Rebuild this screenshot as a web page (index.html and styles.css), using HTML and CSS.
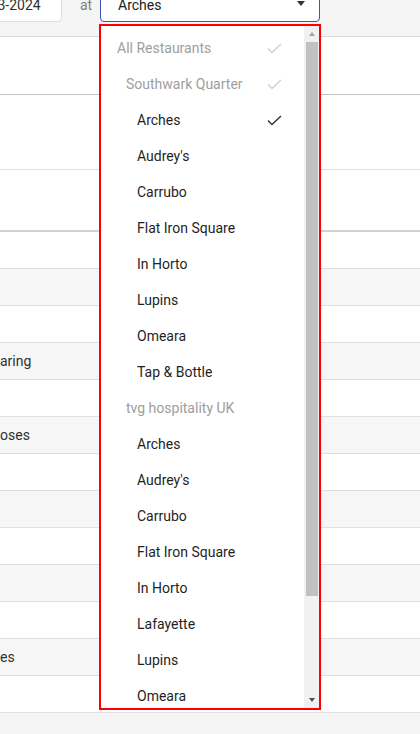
FILE: index.html
```html
<!DOCTYPE html>
<html lang="en">
<head>
<meta charset="utf-8">
<title>Restaurant picker</title>
<link rel="stylesheet" href="styles.css">
</head>
<body>
<div class="page">
  <div class="toolbar">
    <div class="toolbar-row">
      <div class="date-box">13-03-2024</div>
      <span class="at-label">at</span>
      <div class="select-box">
        <span class="select-value">Arches</span>
        <span class="caret"></span>
      </div>
    </div>
  </div>
  <div class="section sec-a"></div>
  <div class="section sec-b"></div>
  <div class="section sec-c"></div>
  <div class="rows">
    <div class="row"></div>
    <div class="row alt"></div>
    <div class="row"></div>
    <div class="row alt"><span class="cell">aring</span></div>
    <div class="row"></div>
    <div class="row alt"><span class="cell">oses</span></div>
    <div class="row"></div>
    <div class="row alt"></div>
    <div class="row"></div>
    <div class="row alt"></div>
    <div class="row"></div>
    <div class="row alt"><span class="cell">es</span></div>
    <div class="row"></div>
  </div>

  <div class="dropdown">
    <ul class="options">
      <li class="opt group l0"><span>All Restaurants</span><svg class="check" viewBox="0 0 15 11"><path d="M1 5.5 L5 9.5 L14 1"/></svg></li>
      <li class="opt group l1"><span>Southwark Quarter</span><svg class="check" viewBox="0 0 15 11"><path d="M1 5.5 L5 9.5 L14 1"/></svg></li>
      <li class="opt l2 selected"><span>Arches</span><svg class="check" viewBox="0 0 15 11"><path d="M1 5.5 L5 9.5 L14 1"/></svg></li>
      <li class="opt l2"><span>Audrey's</span></li>
      <li class="opt l2"><span>Carrubo</span></li>
      <li class="opt l2"><span>Flat Iron Square</span></li>
      <li class="opt l2"><span>In Horto</span></li>
      <li class="opt l2"><span>Lupins</span></li>
      <li class="opt l2"><span>Omeara</span></li>
      <li class="opt l2"><span>Tap &amp; Bottle</span></li>
      <li class="opt group l1"><span>tvg hospitality UK</span></li>
      <li class="opt l2"><span>Arches</span></li>
      <li class="opt l2"><span>Audrey's</span></li>
      <li class="opt l2"><span>Carrubo</span></li>
      <li class="opt l2"><span>Flat Iron Square</span></li>
      <li class="opt l2"><span>In Horto</span></li>
      <li class="opt l2"><span>Lafayette</span></li>
      <li class="opt l2"><span>Lupins</span></li>
      <li class="opt l2"><span>Omeara</span></li>
      <li class="opt l2"><span>Tap &amp; Bottle</span></li>
    </ul>
    <div class="scrollbar">
      <div class="sb-btn"><span class="sb-up"></span></div>
      <div class="sb-thumb"></div>
      <div class="sb-rest"></div>
      <div class="sb-btn"><span class="sb-down"></span></div>
    </div>
  </div>
</div>
</body>
</html>
```

FILE: styles.css
```css
html, body {
  margin: 0;
  padding: 0;
  background: #f5f5f5;
  height: 734px;
  overflow: hidden;
}
body {
  font-family: Roboto, "Liberation Sans", Arial, sans-serif;
  font-size: 14px;
  color: #212121;
}
.page {
  position: relative;
  width: 420px;
  height: 734px;
  overflow: hidden;
}
.toolbar {
  box-sizing: border-box;
  height: 37px;
  padding-bottom: 14px;
  background: #f5f5f5;
  border-bottom: 1px solid #dcdcdc;
  display: flex;
  align-items: flex-end;
}
.toolbar-row {
  display: flex;
  align-items: center;
  height: 34px;
  flex-shrink: 0;
}
.date-box {
  box-sizing: border-box;
  margin-left: -42px;
  width: 104px;
  height: 34px;
  background: #fff;
  border: 1px solid #dedede;
  border-radius: 4px;
  padding-left: 11px;
  display: flex;
  align-items: center;
  color: #303030;
  line-height: 1;
}
.at-label {
  box-sizing: border-box;
  width: 38px;
  padding-left: 18px;
  color: #808080;
}
.select-box {
  box-sizing: border-box;
  width: 220px;
  height: 34px;
  background: #fff;
  border: 1px solid #3f51b5;
  border-radius: 4px;
  display: flex;
  align-items: center;
  justify-content: space-between;
  padding: 0 14px 0 17px;
}
.caret {
  width: 0;
  height: 0;
  border-left: 4px solid transparent;
  border-right: 4px solid transparent;
  border-top: 5px solid #333;
  margin-top: -4px;
}
.section {
  background: #fff;
}
.sec-a {
  height: 57px;
  border-bottom: 1px solid #c4c4c4;
}
.sec-b {
  height: 74px;
  border-bottom: 1px solid #e0e0e0;
}
.sec-c {
  height: 60px;
  border-bottom: 2px solid #d2d2d2;
}
.rows {
  display: flex;
  flex-direction: column;
}
.row {
  height: 36px;
  background: #fff;
  border-bottom: 1px solid #e0e0e0;
  display: flex;
  align-items: center;
}
.row.alt {
  background: #f6f6f6;
}
.cell {
  color: #303030;
  padding-left: 0;
}

.dropdown {
  position: absolute;
  left: 99px;
  top: 24px;
  width: 222px;
  height: 686px;
  box-sizing: border-box;
  border: 2px solid #ff0000;
  background: #fff;
  display: flex;
  overflow: hidden;
}
.options {
  list-style: none;
  margin: 0;
  padding: 4px 0 0 0;
  flex: 1;
  overflow: hidden;
}
.opt {
  height: 36px;
  display: flex;
  align-items: center;
  justify-content: space-between;
  padding-right: 22px;
  color: #1f1f24;
}
.opt.group {
  color: #9e9e9e;
}
.l0 { padding-left: 16px; }
.l1 { padding-left: 25px; }
.l2 { padding-left: 36px; }
.check {
  width: 15px;
  height: 11px;
  fill: none;
  stroke: #d0d0d0;
  stroke-width: 1.4;
}
.selected .check {
  stroke: #333;
}
.scrollbar {
  width: 15px;
  background: #f1f1f1;
  display: flex;
  flex-direction: column;
}
.sb-btn {
  height: 16px;
  display: flex;
  align-items: center;
  justify-content: center;
}
.sb-up {
  width: 0;
  height: 0;
  border-left: 3.5px solid transparent;
  border-right: 3.5px solid transparent;
  border-bottom: 4px solid #a3a3a3;
}
.sb-down {
  width: 0;
  height: 0;
  border-left: 3.5px solid transparent;
  border-right: 3.5px solid transparent;
  border-top: 4px solid #505050;
}
.sb-thumb {
  height: 554px;
  margin: 0 1px 0 2px;
  background: #c1c1c1;
}
.sb-rest {
  flex: 1;
}
```
